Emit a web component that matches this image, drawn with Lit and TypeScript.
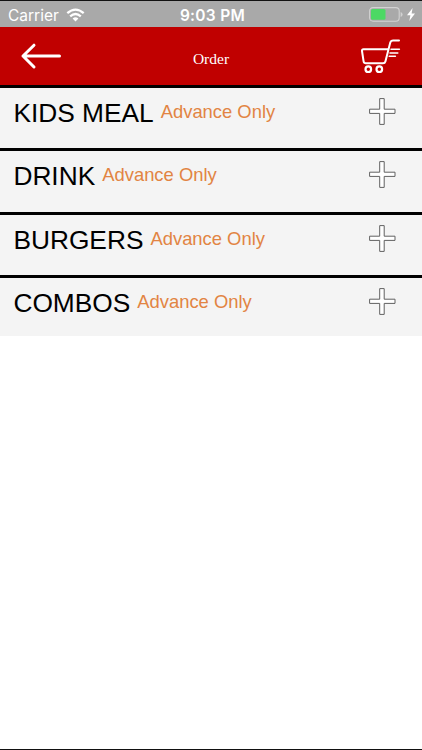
import { LitElement, html, css } from "lit";
import { customElement, property } from "lit/decorators.js";

@customElement("status-bar")
class StatusBar extends LitElement {
  static styles = css`
    :host {
      display: grid;
      grid-template-columns: 1fr auto 1fr;
      align-items: center;
      box-sizing: border-box;
      height: 27px;
      padding: 2px 7px 0 8px;
      border-top: 1px solid #111;
      background: #a9a9a9;
      color: #fff;
      font-family: Inter, "Liberation Sans", sans-serif;
      font-size: 15.5px;
      line-height: 20px;
    }
    .left, .right { display: flex; align-items: center; }
    .left { gap: 7px; }
    .left span, .time { padding-top: 1px; }
    .right { justify-content: flex-end; gap: 4px; padding-bottom: 2px; }
    .time { font-weight: 600; font-size: 15.5px; letter-spacing: 0.3px; padding-left: 2px; }
    svg { display: block; }
  `;
  render() {
    return html`
      <div class="left">
        <span>Carrier</span>
        <svg width="19" height="14" viewBox="0 0 19 14" fill="none" stroke="#fff" stroke-width="2.3">
          <path d="M1.3 5.2Q9.5 -2 17.7 5.2" />
          <path d="M4.2 8.3Q9.5 3.6 14.8 8.3" />
          <path d="M9.5 13.4L6.6 10.4Q9.5 8.2 12.4 10.4Z" fill="#fff" stroke="none" />
        </svg>
      </div>
      <div class="time">9:03 PM</div>
      <div class="right">
        <svg width="34" height="15" viewBox="0 0 34 15">
          <rect x="0.6" y="0.6" width="29.6" height="13.6" rx="3.4" fill="none" stroke="#d2d2d2" stroke-width="1.1" />
          <rect x="2" y="2" width="14.5" height="10.8" rx="1.6" fill="#4cd964" />
          <path d="M31.6 5v5Q33.6 9.2 33.6 7.5T31.6 5Z" fill="#d2d2d2" />
        </svg>
        <svg width="8" height="13" viewBox="0 0 8 13">
          <path d="M5.6 0L0 7.2H3.4L2.3 13L8 5.6H4.6Z" fill="#fff" />
        </svg>
      </div>
    `;
  }
}

@customElement("title-bar")
class TitleBar extends LitElement {
  static styles = css`
    :host {
      display: grid;
      grid-template-columns: 1fr auto 1fr;
      align-items: center;
      box-sizing: border-box;
      height: 58px;
      padding: 0 20px;
      background: #c00000;
      color: #fff;
    }
    .title {
      font: 15.5px/20px "Liberation Serif", serif;
      padding-top: 6px;
    }
    .cart { justify-self: end; }
    svg { display: block; }
  `;
  render() {
    return html`
      <svg width="42" height="28" viewBox="0 0 42 28" fill="none" stroke="#fff" stroke-width="3" stroke-linecap="round" stroke-linejoin="round">
        <path d="M39.5 14H3M14 3.2L3 14L14 25" />
      </svg>
      <div class="title">Order</div>
      <svg class="cart" width="42" height="36" viewBox="0 0 42 36" fill="none" stroke="#fff" stroke-width="2" stroke-linecap="round" stroke-linejoin="round">
        <path d="M39 2.6H33.2Q30.8 2.6 30.2 4.8L25.4 23.4Q24.9 25.2 23 25.2H5.8Q3.9 25.2 3.6 23.4L2 13Q1.8 11.3 3.5 11.3H27.5" />
        <path d="M31 11.3H39.4M30 14.9H37.8M29.2 18.3H35.4" stroke-width="1.5" />
        <circle cx="8.3" cy="31.2" r="2.8" stroke-width="2.2" />
        <circle cx="19.3" cy="31.2" r="2.8" stroke-width="2.2" />
      </svg>
    `;
  }
}

@customElement("menu-row")
class MenuRow extends LitElement {
  @property() name = "";
  @property() note = "";

  static styles = css`
    :host {
      display: flex;
      align-items: flex-start;
      box-sizing: border-box;
      padding: 0 26px 0 13.4px;
      background: #f4f4f4;
      font-family: "Liberation Sans", Arial, sans-serif;
    }
    .name { font-size: 26.3px; line-height: 30px; padding-top: 10px; color: #000; }
    .note { font-size: 18.4px; line-height: 22px; padding-top: 13px; margin-left: 7px; color: #e28443; }
    .plus { display: block; margin: 10px 0 0 auto; }
  `;
  render() {
    return html`
      <span class="name">${this.name}</span>
      <span class="note">${this.note}</span>
      <svg class="plus" width="27" height="27" viewBox="0 0 27 27">
        <path d="M10.7 .6H15.2V11.2H26V15.4H15.2V26.4H10.7V15.4H.6V11.2H10.7Z" fill="#fff" stroke="#606060" stroke-width="1" />
      </svg>
    `;
  }
}

@customElement("app-root")
class AppRoot extends LitElement {
  static styles = css`
    :host {
      display: flex;
      flex-direction: column;
      box-sizing: border-box;
      height: 750px;
      overflow: hidden;
      background: #fff;
      border-bottom: 1px solid #111;
    }
    .list {
      display: grid;
      grid-template-rows: 63.3px 63.3px 63.3px 61.6px;
    }
    menu-row { border-top: 3px solid #000; }
  `;
  private items = ["KIDS MEAL", "DRINK", "BURGERS", "COMBOS"];
  render() {
    return html`
      <status-bar></status-bar>
      <title-bar></title-bar>
      <div class="list">
        ${this.items.map((n) => html`<menu-row .name=${n} .note=${"Advance Only"}></menu-row>`)}
      </div>
    `;
  }
}
